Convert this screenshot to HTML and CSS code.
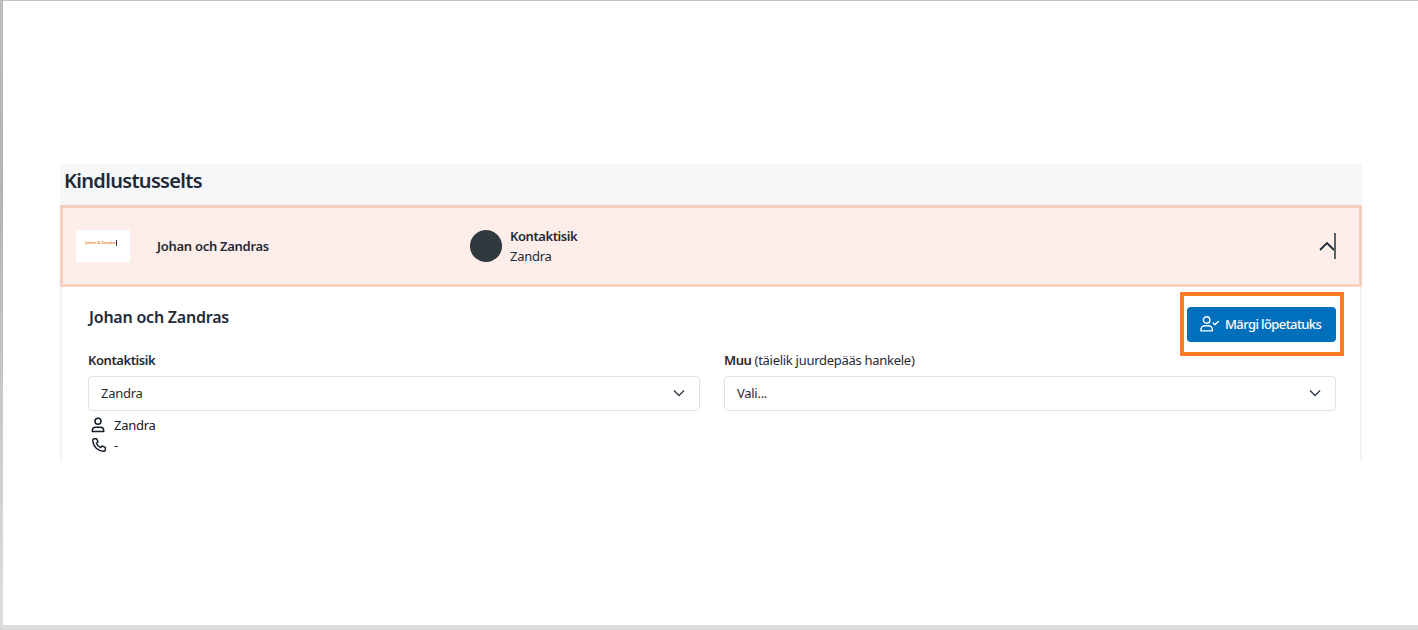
FILE: index.html
```html
<!DOCTYPE html>
<html lang="et">
<head>
<meta charset="utf-8">
<title>Kindlustusselts</title>
<link rel="stylesheet" href="styles.css">
</head>
<body>
<div class="screen">
  <section class="section">
    <h2 class="section-title">Kindlustusselts</h2>
    <div class="row">
      <div class="logo"><span class="logo-text">Johan &amp; Zandra</span></div>
      <div class="row-name">Johan och Zandras</div>
      <div class="contact">
        <div class="avatar"></div>
        <div class="contact-text">
          <div class="strong">Kontaktisik</div>
          <div>Zandra</div>
        </div>
      </div>
      <div class="toggle">
        <svg class="chev-up" width="16" height="12" viewBox="0 0 16 12"><path d="M1 10 8 3 15 10" fill="none" stroke="#1f2a37" stroke-width="1.800"/></svg>
        <span class="caret"></span>
      </div>
    </div>
    <div class="panel">
      <div class="highlight"></div>
      <div class="panel-head">
        <h3 class="panel-title">Johan och Zandras</h3>
        <button class="btn" type="button">
          <svg width="19" height="18" viewBox="0 0 20 18" fill="none" stroke="#fff" stroke-width="1.500"><circle cx="7" cy="4.800" r="3.400"/><path d="M1 16.200v-1.400c0-2.300 1.900-4 4.200-4h3.600c2.300 0 4.200 1.700 4.200 4v1.400z" stroke-linejoin="round"/><path d="M14 8l1.800 1.800L19.200 6.400" stroke-linecap="round" stroke-linejoin="round"/></svg>
          <span>Märgi lõpetatuks</span>
        </button>
      </div>
      <div class="fields">
        <div class="field">
          <label class="label strong">Kontaktisik</label>
          <div class="select">
            <span>Zandra</span>
            <svg width="12" height="8" viewBox="0 0 12 8"><path d="M1 1.500 6 6.500 11 1.500" fill="none" stroke="#374151" stroke-width="1.500"/></svg>
          </div>
          <div class="info">
            <div class="info-row">
              <svg width="16" height="16" viewBox="0 0 16 16" fill="none" stroke="#111827" stroke-width="1.500"><circle cx="8" cy="4.300" r="3"/><path d="M2.300 14.500v-1c0-2 1.600-3.300 3.500-3.300h4.400c1.900 0 3.500 1.300 3.500 3.300v1z" stroke-linejoin="round"/></svg>
              <span>Zandra</span>
            </div>
            <div class="info-row">
              <svg class="phone" width="16" height="16" viewBox="0 0 24 24" fill="none" stroke="#111827" stroke-width="2.200" stroke-linejoin="round"><path d="M5 2.500h3.500l2 5-2.500 2c1.200 2.800 3.700 5.300 6.500 6.500l2-2.500 5 2V19c0 1.500-1.200 2.600-2.700 2.500C9.800 20.800 3.200 14.200 2.500 5.200 2.400 3.700 3.500 2.500 5 2.500z"/></svg>
              <span>-</span>
            </div>
          </div>
        </div>
        <div class="field">
          <label class="label"><span class="strong">Muu</span> (täielik juurdepääs hankele)</label>
          <div class="select">
            <span>Vali...</span>
            <svg width="12" height="8" viewBox="0 0 12 8"><path d="M1 1.500 6 6.500 11 1.500" fill="none" stroke="#374151" stroke-width="1.500"/></svg>
          </div>
        </div>
      </div>
    </div>
  </section>
</div>
</body>
</html>
```

FILE: styles.css
```css
* { box-sizing: border-box; }
html, body { margin: 0; height: 100%; }
body {
  background: linear-gradient(#bdbdbd, #b2b3b3 30%, #dcdcdc 95%);
  font-family: "Noto Sans", "Open Sans", sans-serif;
  color: #1f2937;
  font-size: 13px;
  letter-spacing: -0.28px;
  overflow: hidden;
}
.screen {
  width: 1415px;
  height: 630px;
  margin-left: 3px;
  background: #fff;
  border-top: 1px solid #c4c4c4;
  border-bottom: 5px solid #dedede;
  padding: 163px 56px 0 57px;
}
.section { width: 1302px; }
.section-title {
  margin: 0;
  height: 41px;
  background: #f6f7f9;
  padding: 3px 4px 0;
  font-size: 20px;
  line-height: 27px;
  font-weight: 600;
  letter-spacing: -0.68px;
  color: #1f2937;
}
.strong { font-weight: 600; letter-spacing: -0.42px; }
.row {
  height: 82px;
  background: #fdeee9;
  border: 3px solid #f5cdbd;
  border-bottom-color: #f9d3c2;
  display: flex;
  align-items: center;
  padding: 0 23px 0 13px;
}
.logo {
  width: 54px;
  height: 32px;
  background: #fff;
  flex: none;
  padding: 6px 9px 0;
  line-height: 6px;
}
.logo-text {
  display: inline-block;
  font-size: 4.200px;
  font-weight: 600;
  letter-spacing: -0.05px;
  white-space: nowrap;
  color: #ec7f2e;
  border-right: 1px solid #333;
}
.row-name {
  margin-left: 27px;
  width: 313px;
  font-weight: 600;
  letter-spacing: -0.28px;
  flex: none;
}
.contact { display: flex; align-items: center; gap: 8px; flex: 1; }
.avatar { width: 32px; height: 32px; border-radius: 50%; background: #30393d; }
.contact-text { line-height: 20px; }
.toggle { display: flex; align-items: center; }
.chev-up { margin-right: -1px; }
.caret { width: 2px; height: 26px; background: #5b6168; }
.panel {
  position: relative;
  height: 175px;
  background: #fff;
  border-left: 2px solid #f2f3f5;
  border-right: 2px solid #f2f3f5;
  padding: 20px 24px 0 26px;
}
.highlight {
  position: absolute;
  left: 1118px;
  top: 5px;
  width: 164px;
  height: 64px;
  border: 4px solid #fd7e22;
}
.panel-head {
  display: flex;
  justify-content: space-between;
  align-items: center;
  height: 35px;
}
.panel-title {
  margin: -15px 0 0;
  padding-left: 1px;
  font-size: 16px;
  font-weight: 600;
  line-height: 20px;
  letter-spacing: -0.22px;
}
.btn {
  display: flex;
  align-items: center;
  gap: 6px;
  width: 149px;
  height: 35px;
  padding: 0 0 2px 13px;
  background: #0070bc;
  color: #fff;
  border: 0;
  border-radius: 4px;
  font: inherit;
  letter-spacing: -0.6px;
  font-weight: 500;
}
.fields { display: grid; grid-template-columns: 612px 612px; column-gap: 24px; margin-top: 9px; }
.label { display: block; line-height: 18px; margin-bottom: 7px; }
.select {
  height: 35px;
  border: 1px solid #dfe1e6;
  border-radius: 4px;
  display: flex;
  justify-content: space-between;
  align-items: center;
  padding: 0 14px 1px 12px;
}
.info { margin-top: 4px; padding-left: 2px; }
.info-row { display: flex; align-items: center; gap: 8px; height: 20px; color: #111827; }
.phone { transform: translateX(1px); }
```
